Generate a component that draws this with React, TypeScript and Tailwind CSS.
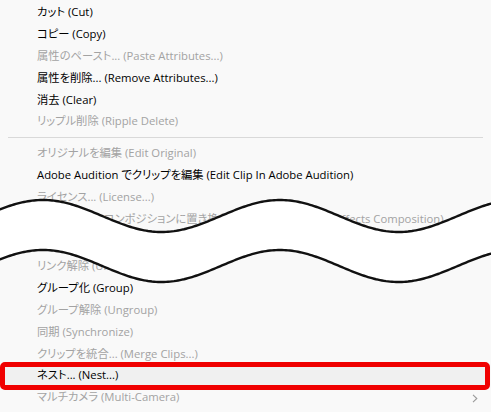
import React from "react";

type Item = { label: string; disabled?: boolean; highlighted?: boolean; submenu?: boolean };

const upper: Item[] = [
  { label: "カット (Cut)" },
  { label: "コピー (Copy)" },
  { label: "属性のペースト... (Paste Attributes...)", disabled: true },
  { label: "属性を削除... (Remove Attributes...)" },
  { label: "消去 (Clear)" },
  { label: "リップル削除 (Ripple Delete)", disabled: true },
];

const middle: Item[] = [
  { label: "オリジナルを編集 (Edit Original)", disabled: true },
  { label: "Adobe Audition でクリップを編集 (Edit Clip In Adobe Audition)" },
  { label: "ライセンス... (License...)", disabled: true },
  { label: "After Effects コンポジションに置き換え (Replace With After Effects Composition)", disabled: true },
];

const lower: Item[] = [
  { label: "リンク解除 (Unlink)", disabled: true },
  { label: "グループ化 (Group)" },
  { label: "グループ解除 (Ungroup)", disabled: true },
  { label: "同期 (Synchronize)", disabled: true },
  { label: "クリップを統合... (Merge Clips...)", disabled: true },
  { label: "ネスト... (Nest...)", highlighted: true },
  { label: "マルチカメラ (Multi-Camera)", disabled: true, submenu: true },
];

function Row({ item }: { item: Item }) {
  return (
    <div className="relative flex h-[21.8px] shrink-0 items-center pl-[37px]">
      {item.highlighted && (
        <div className="absolute -top-[3px] -bottom-[3px] left-0 right-[1px] rounded-[5px] border-[5px] border-[#f00000] bg-[#f0f0f0]" />
      )}
      <span
        className={
          "relative whitespace-nowrap " +
          (item.disabled ? "text-[#a3a3a3]" : "text-[#000000]")
        }
      >
        {item.label}
      </span>
      {item.submenu && (
        <svg className="absolute right-[13px] top-[7px]" width="6" height="9" viewBox="0 0 6 9">
          <polyline points="1,0.8 4.8,4.5 1,8.2" fill="none" stroke="#9a9a9a" strokeWidth="1.1" />
        </svg>
      )}
    </div>
  );
}

function Separator({ height }: { height: string }) {
  return (
    <div className={"flex shrink-0 items-center pl-[8px] pr-[8px] " + height}>
      <div className="h-px w-full bg-[#d9d9d9]" />
    </div>
  );
}

// Torn-edge band drawn across the list: two sine curves with white between them.
function Band() {
  const period = 237;
  const phase = 43;
  const amp = 16;
  const top = (x: number) => 216 - amp * Math.cos((2 * Math.PI * (x - phase)) / period);
  const bottom = (x: number) => 266 - amp * Math.cos((2 * Math.PI * (x - phase)) / period);
  const xs: number[] = [];
  for (let x = -4; x <= 496; x += 2) xs.push(x);
  const topPts = xs.map((x) => `${x},${top(x).toFixed(2)}`);
  const botPts = xs.map((x) => `${x},${bottom(x).toFixed(2)}`);
  const fill = `M${topPts.join(" L")} L${[...botPts].reverse().join(" L")} Z`;
  return (
    <svg className="pointer-events-none absolute left-0 top-0" width="491" height="412" viewBox="0 0 491 412">
      <path d={fill} fill="#ffffff" />
      <path d={`M${topPts.join(" L")}`} fill="none" stroke="#111111" strokeWidth="2.4" />
      <path d={`M${botPts.join(" L")}`} fill="none" stroke="#111111" strokeWidth="2.4" />
    </svg>
  );
}

export default function App() {
  return (
    <div
      className="relative h-[412px] w-[491px] overflow-hidden bg-[#f9f9f9] text-[11.3px] [font-feature-settings:'palt']"
      style={{ fontFamily: '"Open Sans", "Noto Sans CJK JP", sans-serif' }}
    >
      <div className="flex flex-col pt-[2px]">
        {upper.map((it) => (
          <Row key={it.label} item={it} />
        ))}
        <Separator height="h-[10px]" />
        {middle.map((it) => (
          <Row key={it.label} item={it} />
        ))}
        <div className="h-[26px] shrink-0" />
        {lower.map((it) => (
          <Row key={it.label} item={it} />
        ))}
      </div>
      <Band />
    </div>
  );
}
